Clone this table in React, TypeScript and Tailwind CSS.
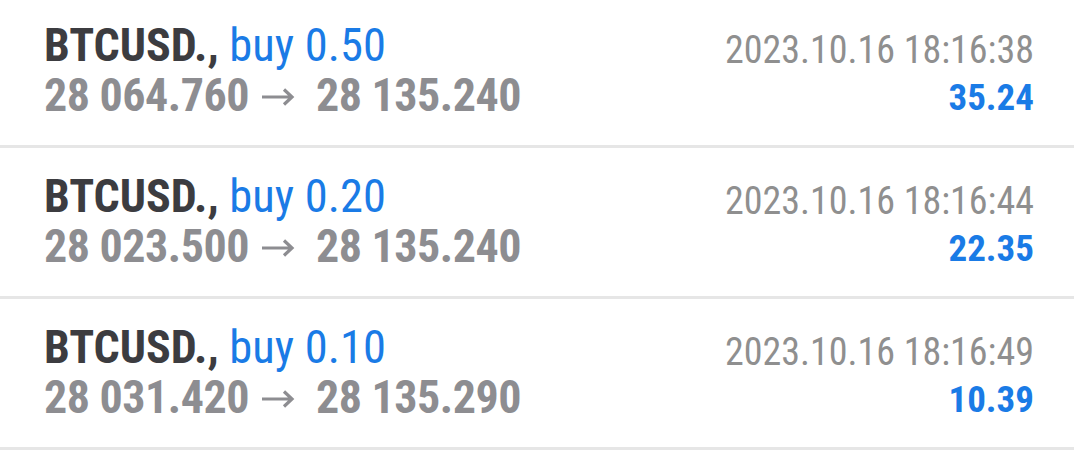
const trades = [
  { symbol: "BTCUSD.,", side: "buy 0.50", open: "28 064.760", close: "28 135.240", time: "2023.10.16 18:16:38", profit: "35.24" },
  { symbol: "BTCUSD.,", side: "buy 0.20", open: "28 023.500", close: "28 135.240", time: "2023.10.16 18:16:44", profit: "22.35" },
  { symbol: "BTCUSD.,", side: "buy 0.10", open: "28 031.420", close: "28 135.290", time: "2023.10.16 18:16:49", profit: "10.39" },
];

export default function App() {
  return (
    <div className="w-[1074px] h-[460px] overflow-hidden bg-white font-['Roboto_Condensed',Roboto,sans-serif]">
      <div className="-mt-[3px]">
        {trades.map((t, i) => (
          <TradeRow key={i} {...t} />
        ))}
      </div>
    </div>
  );
}

function Arrow() {
  return (
    <svg width="34" height="20" viewBox="0 0 34 20" className="ml-[12px] mr-[21px] mt-[4px] shrink-0">
      <path
        d="M1 10 H31 M23 2.5 L31 10 L23 17.5"
        fill="none"
        stroke="#8d8d91"
        strokeWidth="3.2"
      />
    </svg>
  );
}

function TradeRow({
  symbol,
  side,
  open,
  close,
  time,
  profit,
}: {
  symbol: string;
  side: string;
  open: string;
  close: string;
  time: string;
  profit: string;
}) {
  return (
    <div className="flex justify-between items-start h-[151px] pl-[44px] pr-[40px] pt-[23px] border-b-[3px] border-[#e6e6e6]">
      <div className="flex flex-col">
        <div className="text-[46px] leading-[50px] whitespace-nowrap">
          <span className="font-bold text-[#3c3c40]">{symbol}</span>{" "}
          <span className="text-[46.5px] text-[#1a7be6]">{side}</span>
        </div>
        <div className="flex items-center text-[46px] leading-[50px] font-bold text-[#8d8d91] whitespace-nowrap">
          <span className="tracking-[-0.5px]">{open}</span>
          <Arrow />
          <span className="tracking-[-0.5px]">{close}</span>
        </div>
      </div>

      <div className="flex flex-col items-end pt-[6px]">
        <div className="text-[38px] leading-[48px] text-[#8f8f8f]">{time}</div>
        <div className="text-[37px] leading-[48px] font-bold text-[#1a7be6]">{profit}</div>
      </div>
    </div>
  );
}
